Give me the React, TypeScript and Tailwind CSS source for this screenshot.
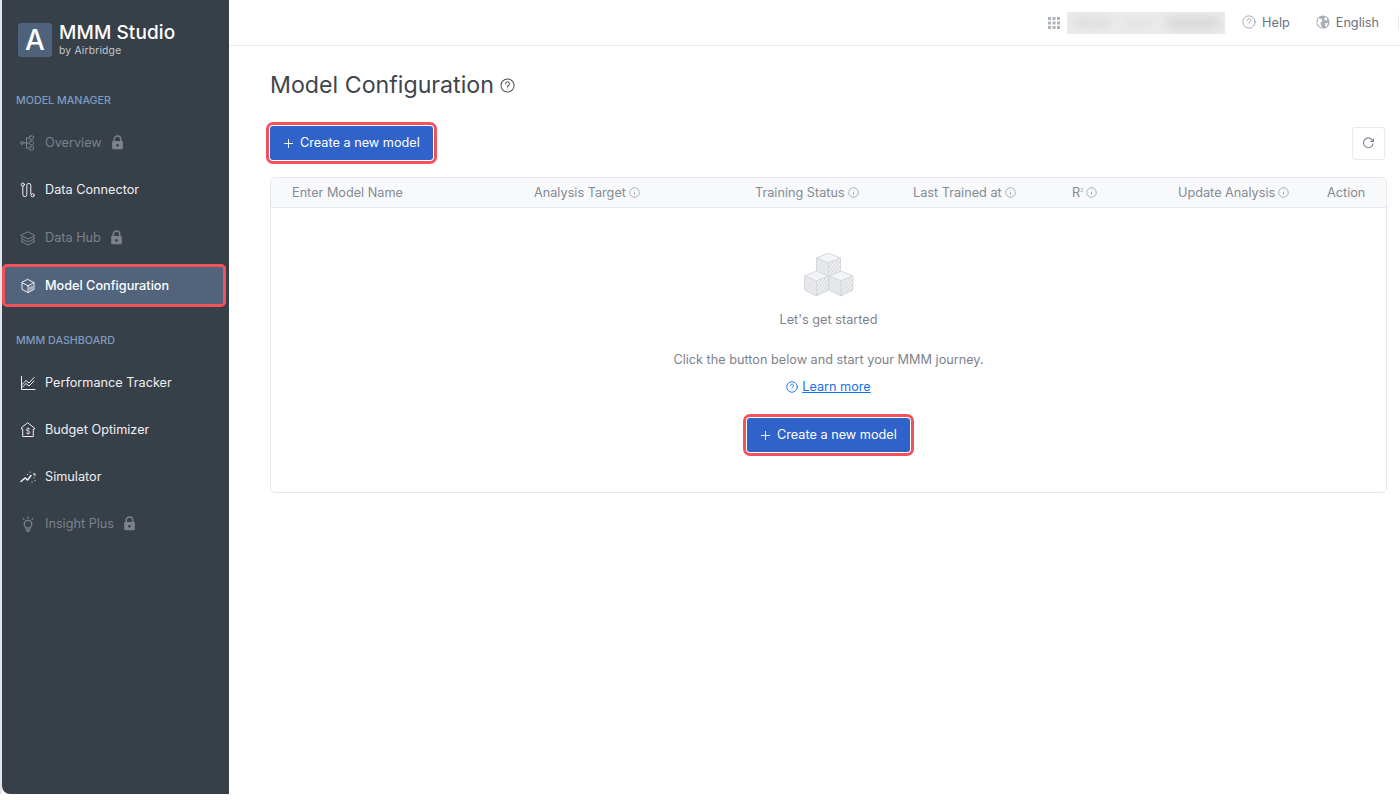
import React from "react";

const Lock = ({ className = "" }: { className?: string }) => (
  <svg viewBox="0 0 14 16" className={`w-[13px] h-[15px] ${className}`} fill="none">
    <path d="M3.5 7V4.6a3.5 3.5 0 0 1 7 0V7" stroke="#7b8289" strokeWidth="1.6" />
    <rect x="1.2" y="6.4" width="11.6" height="9" rx="1.4" fill="#7b8289" />
    <circle cx="7" cy="10.9" r="1.4" fill="#373f49" />
  </svg>
);

const Ico = ({ children, color }: { children: React.ReactNode; color: string }) => (
  <svg viewBox="0 0 16 16" className="w-[16px] h-[16px] shrink-0" fill="none" stroke={color} strokeWidth="1" strokeLinecap="round" strokeLinejoin="round">
    {children}
  </svg>
);

const OverviewIcon = ({ c }: { c: string }) => (
  <Ico color={c}>
    <circle cx="2" cy="8" r="1.4" />
    <path d="M3.4 8H9M6.5 3v10M6.5 3H9M6.5 13H9" />
    <rect x="9.5" y="1" width="4" height="3.4" rx="1" />
    <rect x="9.5" y="6.3" width="4" height="3.4" rx="1" />
    <rect x="9.5" y="11.6" width="4" height="3.4" rx="1" />
  </Ico>
);
const ConnectorIcon = ({ c }: { c: string }) => (
  <Ico color={c}>
    <circle cx="2.8" cy="2.6" r="1.6" />
    <circle cx="12.6" cy="13.2" r="1.6" />
    <path d="M2.8 4.2v8.4a2 2 0 0 0 4 0V3.4a2 2 0 0 1 4 0v8.2" />
  </Ico>
);
const HubIcon = ({ c }: { c: string }) => (
  <Ico color={c}>
    <path d="M8 2 15 5.5 8 9 1 5.5Z" />
    <path d="M2.5 7.6 1 8.5 8 12l7-3.5-1.5-.9" />
    <path d="M2.5 10.6 1 11.5 8 15l7-3.5-1.5-.9" />
  </Ico>
);
const CubeIcon = ({ c }: { c: string }) => (
  <Ico color={c}>
    <path d="M8 1.5 14 4.6v6.8L8 14.5 2 11.4V4.6Z" />
    <path d="M2 4.6 8 7.8l6-3.2M8 7.8v6.7" />
    <path d="M10 9v3M12 8v3" strokeWidth="1.1" />
  </Ico>
);
const TrackerIcon = ({ c }: { c: string }) => (
  <Ico color={c}>
    <path d="M1.5 1.5v13h13.5" />
    <path d="M2 9.5 6 5.5l3 2.5 5-5.5" />
    <path d="M2 12.5l4-4 3 2.5 5-5" />
  </Ico>
);
const BudgetIcon = ({ c }: { c: string }) => (
  <Ico color={c}>
    <path d="M8 1 14.5 6v1h-1.2v7.5H2.7V7H1.5V6Z" />
    <text x="8" y="11.6" textAnchor="middle" fontSize="7" stroke="none" fill={c} fontFamily="Inter, sans-serif">$</text>
  </Ico>
);
const SimIcon = ({ c }: { c: string }) => (
  <svg viewBox="0 0 16 16" className="w-[16px] h-[16px] shrink-0" fill="none" stroke={c} strokeLinecap="round">
    <path d="M1 12.5 5 9l2.6 2L11 6.5" strokeWidth="1.5" />
    <path d="M12 13l.1 0M15 11.5l0 .1M14 8.8l.1 0M15 5l-1.4-.1M15 5l-.1 1.4M9.5 8.6l.1 0M7.5 5.5l.1 0M10 3l0 .1" strokeWidth="1.1" />
  </svg>
);
const BulbIcon = ({ c }: { c: string }) => (
  <svg viewBox="0 0 16 16" className="w-[16px] h-[16px] shrink-0" fill="none" stroke={c} strokeLinecap="round" strokeLinejoin="round">
    <circle cx="8" cy="8.2" r="3.8" strokeWidth="1.3" />
    <path d="M6.2 11.5v2.4h3.6v-2.4M7 15.3h2" strokeWidth="1.2" />
    <path d="M8 .8v1.6M3 2.4l1 1.2M13 2.4l-1 1.2" strokeWidth="1.1" />
  </svg>
);

const Help = ({ s, c, w = 1.2 }: { s: number; c: string; w?: number }) => (
  <svg viewBox="0 0 16 16" style={{ width: s, height: s }} className="shrink-0" fill="none" stroke={c} strokeWidth={w} strokeLinecap="round">
    <circle cx="8" cy="8" r="7" />
    <path d="M5.9 6.2a2.1 2.1 0 1 1 3.2 1.8c-.7.4-1.1.8-1.1 1.6" />
    <circle cx="8" cy="11.7" r=".5" fill={c} stroke="none" />
  </svg>
);

const Info = () => (
  <svg viewBox="0 0 12 12" className="w-[11px] h-[11px] shrink-0 ml-[3px]" fill="none" stroke="#9aa1a9" strokeWidth=".9">
    <circle cx="6" cy="6" r="5.2" />
    <path d="M6 5.4v3" />
    <circle cx="6" cy="3.6" r=".45" fill="#9aa1a9" stroke="none" />
  </svg>
);

const NavItem = ({ icon, label, locked, active, shift }: { icon: React.ReactNode; label: string; locked?: boolean; active?: boolean; shift?: boolean }) => (
  <div className={active
    ? "h-[37px] mt-[2px] mb-[1px] ml-[3px] mr-[6px] pl-[15px] flex items-center gap-[9px] bg-[#52647c] rounded-[2px] outline-[3px] outline-[#f4525a] text-white text-[12.7px] font-medium"
    : `h-[39px] pl-[18px] flex items-center gap-[9px] text-[12.7px] ${shift ? "mt-[1px]" : ""} ${locked ? "text-[#7b8289]" : "text-[#eef0f2]"}`}>
    {icon}
    <span>{label}</span>
    {locked && <Lock />}
  </div>
);

const CreateButton = () => (
  <button className="h-[34px] w-[163px] pl-[14px] flex items-center gap-[7px] bg-[#2f63c9] rounded-[3px] text-white text-[12.7px] outline-[3px] outline-offset-[1px] outline-[#f4525a]">
    <svg viewBox="0 0 10 10" className="w-[9px] h-[9px]" fill="none" stroke="#fff" strokeWidth="1"><path d="M5 0v10M0 5h10" /></svg>
    <span>Create a new model</span>
  </button>
);

const Cube = () => (
  <g stroke="#d5d9de" strokeWidth="1" strokeLinejoin="round">
    <path d="M0 5 12 0l12 5-12 5Z" fill="#f3f4f6" />
    <path d="M0 5v14l12 6V10Z" fill="#e5e7eb" />
    <path d="M24 5v14l-12 6V10Z" fill="url(#hatch)" />
  </g>
);

export default function App() {
  return (
    <div className="w-[1400px] h-[800px] flex bg-white overflow-hidden text-[#6b7280]" style={{ fontFamily: "Inter, 'Liberation Sans', sans-serif" }}>
      <div className="w-[2px] h-[794px] bg-[#e4e5e6] shrink-0" />
      <aside className="w-[227px] h-[794px] bg-[#373f49] rounded-bl-[8px] shrink-0 flex flex-col">
        <div className="h-[94px] flex pl-[16px] pt-[23px]">
          <div className="w-[34px] h-[34px] rounded-[3px] bg-[#4e627c] flex items-center justify-center text-white text-[28px] font-medium leading-none">A</div>
          <div className="ml-[7px] -mt-[1px] flex flex-col">
            <span className="text-white text-[19px] font-medium leading-[22px] tracking-[0.1px]">MMM Studio</span>
            <span className="mt-[1px] text-[#c3c8ce] text-[10.3px] leading-[11px] tracking-[0.2px]">by Airbridge</span>
          </div>
        </div>
        <div className="pl-[14px] h-[14px] flex items-center text-[10.7px] font-medium text-[#7f9cc0]">MODEL MANAGER</div>
        <div className="mt-[15px] flex flex-col gap-[8px]">
          <NavItem icon={<OverviewIcon c="#7b8289" />} label="Overview" locked />
          <NavItem icon={<ConnectorIcon c="#eef0f2" />} label="Data Connector" />
          <NavItem icon={<HubIcon c="#7b8289" />} label="Data Hub" locked shift />
          <NavItem icon={<CubeIcon c="#eef0f2" />} label="Model Configuration" active />
        </div>
        <div className="mt-[29px] pl-[14px] h-[14px] flex items-center text-[10.7px] font-medium text-[#7f9cc0]">MMM DASHBOARD</div>
        <div className="mt-[15px] flex flex-col gap-[8px]">
          <NavItem icon={<TrackerIcon c="#eef0f2" />} label="Performance Tracker" />
          <NavItem icon={<BudgetIcon c="#eef0f2" />} label="Budget Optimizer" />
          <NavItem icon={<SimIcon c="#eef0f2" />} label="Simulator" />
          <NavItem icon={<BulbIcon c="#7b8289" />} label="Insight Plus" locked />
        </div>
      </aside>

      <main className="flex-1 flex flex-col min-w-0">
        <header className="h-[46px] border-b border-[#e9eaec] flex items-center justify-end shrink-0">
          <svg viewBox="0 0 12 12" className="w-[12px] h-[12px] mr-[7px]" fill="#aeb3b9">
            {[0, 4.5, 9].flatMap((x) => [0, 4.5, 9].map((y) => <rect key={`${x}-${y}`} x={x} y={y} width="3" height="3" />))}
          </svg>
          <div className="w-[158px] h-[22px] bg-[#ebebec] overflow-hidden flex items-center justify-center gap-[16px]">
            <div className="w-[36px] h-[9px] bg-[#dcdcde] blur-[5px]" />
            <div className="w-[26px] h-[6px] bg-[#e0e0e2] blur-[5px]" />
            <div className="w-[52px] h-[12px] bg-[#d8d8da] blur-[5px]" />
          </div>
          <div className="ml-[17px] flex items-center gap-[6px] text-[12.7px] text-[#6b7280]">
            <Help s={14} c="#9aa1a9" w={1} />
            <span>Help</span>
          </div>
          <div className="ml-[26px] flex items-center gap-[6px] text-[12.7px] text-[#6b7280]">
            <svg viewBox="0 0 16 16" className="w-[14px] h-[14px]">
              <circle cx="8" cy="8" r="7.5" fill="#a8aeb5" />
              <path d="M3 3.5 6.5 4.5 7 7 5 9l1 2.5 1 3L4 13 1.5 9.5ZM10 2l3 2-1 2.5-2.5-1ZM10.5 9.5l3.5-.5-1.5 3.5-2 1Z" fill="#fff" />
            </svg>
            <span>English</span>
          </div>
          <div className="ml-[19px] w-px h-[15px] bg-[#e9eaec] mr-[1px]" />
        </header>

        <div className="pl-[41px] pr-[13px] pt-[24px] flex flex-col">
          <div className="flex items-center gap-[6px] h-[30px]">
            <h1 className="text-[23.2px] text-[#3f454d] font-normal leading-[30px]">Model Configuration</h1>
            <Help s={15} c="#4b5159" w={1.1} />
          </div>
          <div className="mt-[26px] h-[34px] flex items-center justify-between">
            <CreateButton />
            <button className="w-[33px] h-[33px] mr-[2px] rounded-[3px] border border-[#e7e9ec] flex items-center justify-center bg-white">
              <svg viewBox="0 0 14 14" className="w-[13px] h-[13px]" fill="none" stroke="#6b7280" strokeWidth="1.1">
                <path d="M11.6 4.2A5.2 5.2 0 1 0 12 7" />
                <path d="M12.2 1.8v3h-3" fill="none" />
              </svg>
            </button>
          </div>
          <section className="mt-[17px] h-[316px] border border-[#e5e7eb] rounded-[5px] flex flex-col overflow-hidden">
            <div className="h-[30px] bg-[#f8f9fb] border-b border-[#e5e7eb] grid grid-cols-[242px_221px_158px_159px_106px_149px_1fr] pl-[21px] items-center text-[12.7px] text-[#858b93] shrink-0">
              <span>Enter Model Name</span>
              <span className="flex items-center">Analysis Target<Info /></span>
              <span className="flex items-center">Training Status<Info /></span>
              <span className="flex items-center">Last Trained at<Info /></span>
              <span className="flex items-center">R<sup className="text-[5px] text-[#9aa1a9]">2</sup><Info /></span>
              <span className="flex items-center">Update Analysis<Info /></span>
              <span>Action</span>
            </div>
            <div className="flex-1 flex flex-col items-center">
              <svg viewBox="0 0 50 48" className="w-[50px] h-[48px] mt-[44px]">
                <defs>
                  <pattern id="hatch" width="2.6" height="2.6" patternUnits="userSpaceOnUse" patternTransform="rotate(35)">
                    <rect width="2.6" height="2.6" fill="#f5f6f7" />
                    <rect width="1.2" height="2.6" fill="#d2d5da" />
                  </pattern>
                </defs>
                <g transform="translate(12.5,1)"><Cube /></g>
                <g transform="translate(0.5,19)"><Cube /></g>
                <g transform="translate(25,19)"><Cube /></g>
              </svg>
              <div className="mt-[12px] text-[12.7px] leading-[16px] text-[#7d838b]">Let's get started</div>
              <div className="mt-[24px] text-[12.7px] leading-[16px] text-[#7d838b]">Click the button below and start your MMM journey.</div>
              <a className="mt-[11px] flex items-center gap-[4px] text-[12.7px] leading-[16px] text-[#1570ef] underline">
                <Help s={12} c="#1570ef" w={1.2} />
                Learn more
              </a>
              <div className="mt-[23px]"><CreateButton /></div>
            </div>
          </section>
        </div>
      </main>
    </div>
  );
}
